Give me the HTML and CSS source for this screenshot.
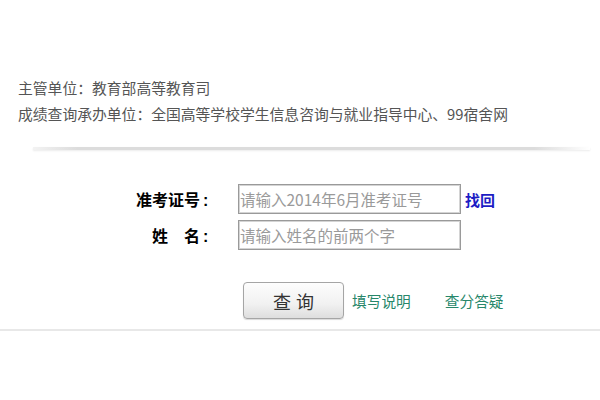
FILE: index.html
```html
<!DOCTYPE html>
<html lang="zh-CN">
<head>
<meta charset="utf-8">
<title>成绩查询</title>
<link rel="stylesheet" href="styles.css">
</head>
<body>
<div class="info">
  <p>主管单位：教育部高等教育司</p>
  <p>成绩查询承办单位：全国高等学校学生信息咨询与就业指导中心、99宿舍网</p>
</div>
<div class="sep"></div>
<form class="form">
  <div class="row">
    <label class="label">准考证号<span class="colon">:</span></label>
    <input class="field" type="text" placeholder="请输入2014年6月准考证号">
    <a class="find" href="#">找回</a>
  </div>
  <div class="row">
    <label class="label">姓&emsp;名<span class="colon">:</span></label>
    <input class="field" type="text" placeholder="请输入姓名的前两个字">
  </div>
  <div class="actions">
    <button class="btn" type="button">查询</button>
    <a class="link" href="#">填写说明</a>
    <a class="link" href="#">查分答疑</a>
  </div>
</form>
<div class="bottom"></div>
</body>
</html>
```
FILE: styles.css
```css
html, body {
  margin: 0;
  padding: 0;
  background: #fff;
  font-family: "Noto Sans CJK SC", "Noto Sans", sans-serif;
}
.info {
  padding: 75px 0 0 18px;
  color: #555;
  font-size: 14.8px;
  line-height: 26px;
}
.info p {
  margin: 0;
}
.sep {
  margin: 20px 10px 0 33px;
  height: 3px;
  background: linear-gradient(to right, rgba(215,215,215,0.3), #dcdcdc 8%, #dcdcdc 90%, rgba(220,220,220,0));
  box-shadow: 0 1px 2px rgba(200,200,200,0.35);
}
.form {
  margin: 0;
  padding-top: 34px;
}
.row {
  display: flex;
  align-items: center;
  height: 30px;
  margin-bottom: 6px;
}
.label {
  width: 216px;
  margin-right: 22px;
  text-align: right;
  font-size: 16px;
  font-weight: bold;
  color: #000;
}
.colon {
  display: inline-block;
  width: 16px;
  padding-left: 3px;
  box-sizing: border-box;
  text-align: left;
  font-family: "Liberation Sans", sans-serif;
  font-weight: bold;
}
.field {
  box-sizing: border-box;
  width: 223px;
  height: 30px;
  margin: 0;
  padding: 0 1px;
  border: 1px solid #9a9a9a;
  box-shadow: inset 0 0 0 1px #d4d4d4;
  font-family: "Noto Sans CJK SC", sans-serif;
  font-size: 15.5px;
  color: #333;
  outline: none;
}
.field::placeholder {
  color: #9a9a9a;
}
.find {
  margin-left: 4px;
  font-size: 15px;
  font-weight: bold;
  color: #1c1cc4;
  text-decoration: none;
}
.actions {
  display: flex;
  align-items: center;
  padding: 26px 0 0 243px;
}
.btn {
  width: 101px;
  height: 37px;
  border: 1px solid #a5a5a5;
  border-radius: 4px;
  background: linear-gradient(#fdfdfd, #f1f1f1 60%, #dedede);
  box-shadow: 0 1px 1px rgba(0,0,0,0.15);
  font-family: "Noto Sans CJK SC", sans-serif;
  font-size: 18px;
  letter-spacing: 5px;
  padding: 0 0 0 5px;
  color: #333;
}
.link {
  margin-left: 8px;
  margin-right: 26px;
  font-size: 14.7px;
  color: #27876a;
  text-decoration: none;
}
.bottom {
  margin-top: 10px;
  height: 2px;
  background: #e8e8e8;
}
```
